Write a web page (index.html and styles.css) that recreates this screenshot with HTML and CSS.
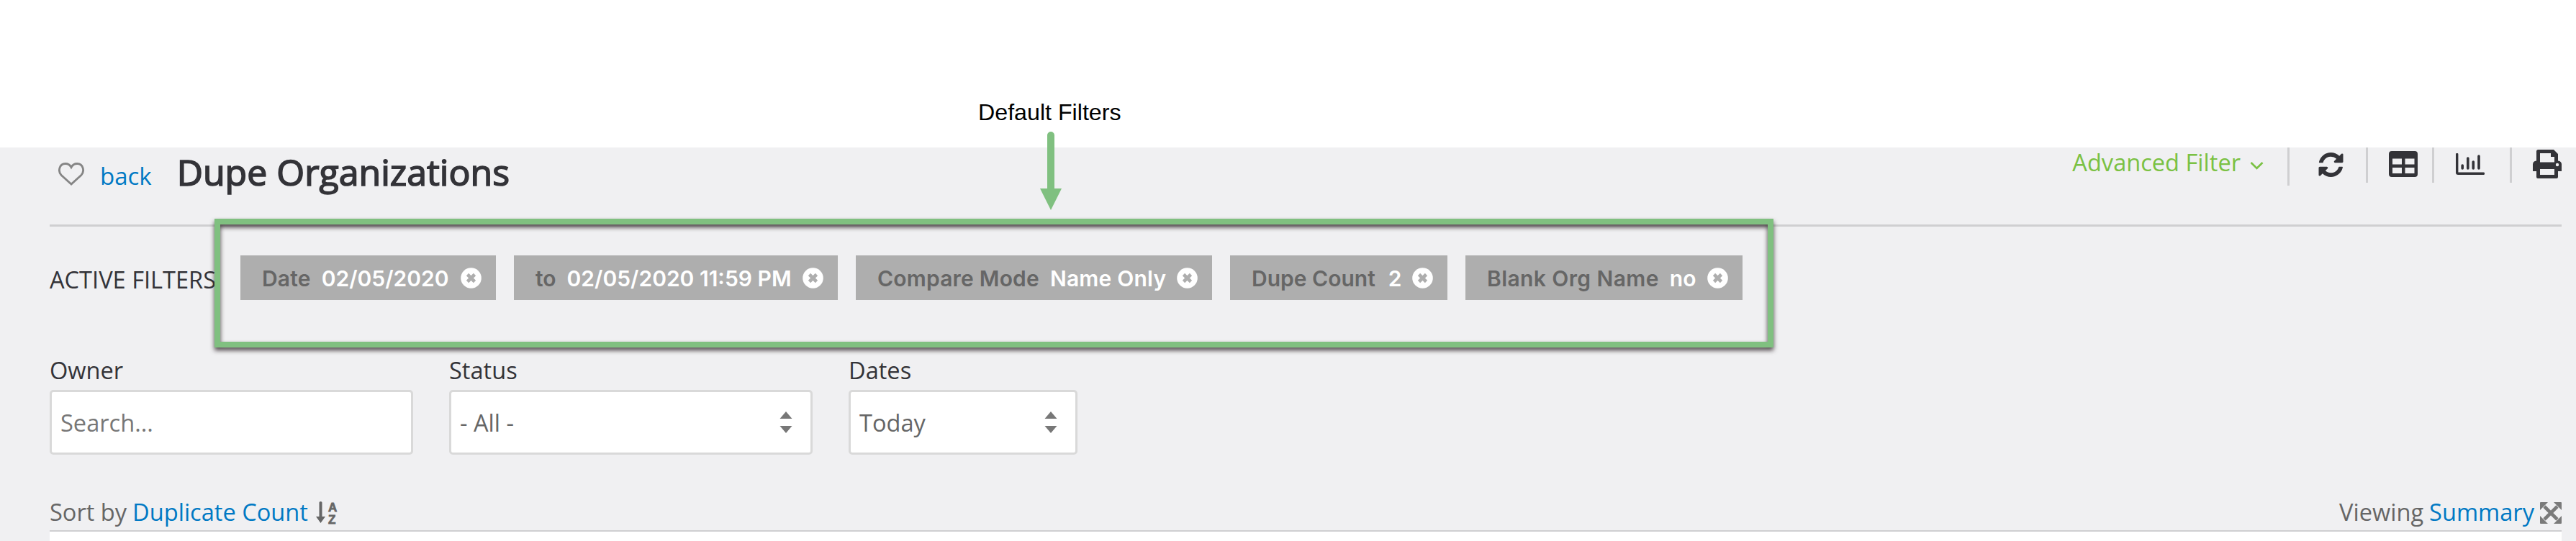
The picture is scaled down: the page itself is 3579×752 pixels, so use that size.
FILE: index.html
```
<!DOCTYPE html>
<html lang="en">
<head>
    <meta charset="UTF-8">
    <meta name="viewport" content="width=device-width, initial-scale=1.0">
    <title>Dupe Organizations</title>
    <link rel="stylesheet" href="styles.css">
</head>
<body>
    <div class="callout">Default Filters</div>
    <svg class="callout-arrow" viewBox="0 0 30 109">
        <path d="M10 84V5a5 5 0 0 1 10 0v74h10L15 109 0 79h10z"/>
    </svg>
    <div class="callout-box"></div>

    <main class="page">
        <header class="page-header">
            <svg class="heart" viewBox="0 0 36 32">
                <path d="M18 30 4.200 17.500C-1 12 1.500 1.500 9.800 1.500c4 0 6.800 2.300 8.200 5 1.400-2.700 4.200-5 8.200-5C34.500 1.500 37 12 31.800 17.500z"/>
            </svg>
            <a class="back" href="#">back</a>
            <h1>Dupe Organizations</h1>

            <div class="tools">
                <a class="advanced" href="#">Advanced Filter</a>
                <svg class="chevron" viewBox="0 0 19 12"><path d="M1.500 2 9.500 10l8-8"/></svg>
                <i class="divider tall"></i>
                <svg class="refresh" viewBox="0 0 1536 1536">
                    <path d="M1511 928q0 5-1 7-64 268-268 434.500T764 1536q-146 0-282.500-55T238 1324l-129 129q-19 19-45 19t-45-19-19-45V960q0-26 19-45t45-19h448q26 0 45 19t19 45-19 45l-137 137q71 66 161 102t187 36q134 0 250-65t186-179q11-17 53-117 8-23 30-23h192q13 0 22.500 9.500t9.500 22.500zM1536 128v448q0 26-19 45t-45 19h-448q-26 0-45-19t-19-45 19-45l138-138q-148-137-349-137-134 0-250 65T332 500q-11 17-53 117-8 23-30 23H50q-13 0-22.500-9.500T18 608v-7q65-268 270-434.500T768 0q146 0 284 55.500T1297 212l130-129q19-19 45-19t45 19 19 45z"/>
                </svg>
                <i class="divider"></i>
                <svg class="table" viewBox="0 0 40 36">
                    <path fill-rule="evenodd" d="M4 0h32a4 4 0 0 1 4 4v28a4 4 0 0 1-4 4H4a4 4 0 0 1-4-4V4a4 4 0 0 1 4-4zM5 10.500v8h13v-8zM22.500 10.500v8h13v-8zM5 23v8h13v-8zM22.500 23v8h13v-8z"/>
                </svg>
                <i class="divider"></i>
                <svg class="chart" viewBox="0 0 40 30">
                    <path d="M1.700 1.500v25.300q0 1.500 1.500 1.500H38.500" stroke-width="3.400"/>
                    <path d="M9.200 17v4M16.800 7v14M24.300 12v9M32 4v17" stroke-width="3.600"/>
                </svg>
                <i class="divider"></i>
                <svg class="print" viewBox="0 0 40 40">
                    <path fill-rule="evenodd" d="M7.500 0H29l6 6v9.500q5 .5 5 5V30h-5v8q0 2-2 2H7q-2 0-2-2v-8H0v-9.500q0-4.500 5-5V2.500Q5 0 7.500 0zM10 5v12.500h20V10h-5V5zM10 27v8h20v-8zM34 18.800a2.200 2.200 0 1 0 0 4.400 2.200 2.200 0 0 0 0-4.400z"/>
                </svg>
            </div>
        </header>

        <section class="active-filters">
            <span class="active-label">ACTIVE FILTERS</span>
            <div class="chips">
                <div class="chip date">
                    <span class="name">Date</span><span class="value">02/05/2020</span>
                    <svg class="close" viewBox="0 0 29 29"><circle cx="14.500" cy="14.500" r="14.300"/><path d="m9.500 9.500 10 10m0-10-10 10"/></svg>
                </div>
                <div class="chip to">
                    <span class="name">to</span><span class="value">02/05/2020 11:59 PM</span>
                    <svg class="close" viewBox="0 0 29 29"><circle cx="14.500" cy="14.500" r="14.300"/><path d="m9.500 9.500 10 10m0-10-10 10"/></svg>
                </div>
                <div class="chip mode">
                    <span class="name">Compare Mode</span><span class="value">Name Only</span>
                    <svg class="close" viewBox="0 0 29 29"><circle cx="14.500" cy="14.500" r="14.300"/><path d="m9.500 9.500 10 10m0-10-10 10"/></svg>
                </div>
                <div class="chip count">
                    <span class="name">Dupe Count</span><span class="value">2</span>
                    <svg class="close" viewBox="0 0 29 29"><circle cx="14.500" cy="14.500" r="14.300"/><path d="m9.500 9.500 10 10m0-10-10 10"/></svg>
                </div>
                <div class="chip blank">
                    <span class="name">Blank Org Name</span><span class="value">no</span>
                    <svg class="close" viewBox="0 0 29 29"><circle cx="14.500" cy="14.500" r="14.300"/><path d="m9.500 9.500 10 10m0-10-10 10"/></svg>
                </div>
            </div>
        </section>

        <form class="fields">
            <label class="field">Owner
                <input type="text" placeholder="Search...">
            </label>
            <div class="field">Status
                <div class="select">- All -
                    <svg class="arrows" viewBox="0 0 18 30"><path d="M9 0l8.500 10H.5zM9 30l8.500-10H.5z"/></svg>
                </div>
            </div>
            <div class="field small">Dates
                <div class="select">Today
                    <svg class="arrows" viewBox="0 0 18 30"><path d="M9 0l8.500 10H.5zM9 30l8.500-10H.5z"/></svg>
                </div>
            </div>
        </form>

        <div class="list-bar">
            <div class="sort">
                Sort by <a href="#">Duplicate Count</a>
                <span class="sort-icon">
                    <svg viewBox="0 0 13 30"><path d="M4.500 1.500q0-1.500 2-1.500t2 1.500V21H13L6.500 30 0 21h4.500z"/></svg>
                    <span class="az"><b>A</b><b>Z</b></span>
                </span>
            </div>
            <div class="viewing">
                Viewing <a href="#">Summary</a>
                <svg class="expand" viewBox="0 0 30 30">
                    <path d="M6 6l18 18M24 6 6 24" stroke-width="4.600"/>
                    <path d="M1 0h10L0 11V1q0-1 1-1zM29 0H19l11 11V1q0-1-1-1zM1 30h10L0 19v10q0 1 1 1zM29 30H19l11-11v10q0 1-1 1z" stroke="none" fill="#7a7a7a"/>
                </svg>
            </div>
        </div>
        <div class="list"></div>
    </main>
</body>
</html>
```
FILE: styles.css
```
* {
    box-sizing: border-box;
}
body {
    margin: 0;
    padding-top: 205px;
    height: 752px;
    overflow: hidden;
    background: #fff;
    color: #333338;
    font-family: "Open Sans", sans-serif;
    font-size: 32.6px;
}
a {
    color: #0079c4;
    text-decoration: none;
}
svg {
    display: block;
    flex: none;
}

/* annotation on top of the page */
.callout {
    position: absolute;
    left: 1359px;
    top: 136px;
    line-height: 40px;
    font-family: "Liberation Sans", sans-serif;
    font-size: 32.2px;
    color: #000;
}
.callout-arrow {
    position: absolute;
    left: 1445px;
    top: 183px;
    width: 30px;
    height: 109px;
    fill: #80c080;
}
.callout-box {
    position: absolute;
    left: 298px;
    top: 304px;
    width: 2166px;
    height: 179px;
    border: 8px solid #80c080;
    filter: drop-shadow(0 4px 3px rgba(50, 40, 45, 0.85));
}

.page {
    height: 547px;
    padding: 0 20px 0 69px;
    background: #f0f0f2;
}

.page-header {
    display: flex;
    align-items: flex-start;
    height: 110px;
    border-bottom: 3px solid #cfcfd1;
}
.heart {
    width: 36px;
    height: 32px;
    margin: 21px 22px 0 12px;
    fill: none;
    stroke: #858585;
    stroke-width: 2.8;
}
.back {
    line-height: 80px;
    margin-right: 35px;
    font-size: 33px;
}
h1 {
    margin: 0;
    font-size: 50px;
    font-weight: 400;
    line-height: 69px;
    -webkit-text-stroke: 1.6px #333338;
}

.tools {
    display: flex;
    align-items: flex-start;
    margin-left: auto;
    fill: #333338;
}
.advanced {
    line-height: 42px;
    color: #7ac143;
}
.chevron {
    width: 19px;
    height: 12px;
    margin: 19px 33px 0 13px;
    fill: none;
    stroke: #7ac143;
    stroke-width: 2.6;
}
.divider {
    width: 3px;
    height: 49px;
    background: #cfcfd1;
}
.divider.tall {
    height: 53px;
}
.refresh {
    width: 35px;
    height: 34px;
    margin: 7px 31px 0 40px;
}
.table {
    width: 40px;
    height: 36px;
    margin: 5px 20px 0 29px;
}
.chart {
    width: 40px;
    height: 30px;
    margin: 8px 35px 0 30px;
    fill: none;
    stroke: #333338;
    stroke-linecap: round;
}
.print {
    width: 40px;
    height: 40px;
    margin: 3px 0 0 29px;
}

.active-filters {
    display: flex;
    align-items: center;
    padding-top: 40px;
}
.active-label {
    width: 265px;
    padding-top: 4px;
    white-space: nowrap;
}
.chips {
    display: flex;
    gap: 25px;
}
.chip {
    display: flex;
    align-items: center;
    height: 62px;
    padding: 0 20px 0 30px;
    background: #aeaeae;
    color: #fff;
    font-family: Inter, sans-serif;
    font-size: 30px;
    font-weight: 600;
    white-space: nowrap;
}
.chip span {
    padding-top: 1px;
}
.chip .name {
    margin-right: 15px;
    color: #666;
}
.close {
    width: 29px;
    height: 29px;
    margin-left: auto;
    fill: #fff;
    stroke: none;
}
.close path {
    stroke: #aeaeae;
    stroke-width: 4.6;
}
.date { width: 355px; }
.to { width: 450px; }
.mode { width: 495px; }
.count { width: 302px; }
.blank { width: 385px; }
.date .name,
.mode .name,
.mode .value { letter-spacing: 0.2px; }
.blank .name { letter-spacing: 0.4px; }
.count .value { padding-left: 3px; }

.fields {
    display: flex;
    gap: 50px;
    margin-top: 75px;
}
.field {
    width: 505px;
    line-height: 45px;
}
.field.small {
    width: 318px;
}
.field input,
.select {
    display: flex;
    align-items: center;
    width: 100%;
    height: 90px;
    margin-top: 5px;
    padding: 0 25px 0 12px;
    border: 3px solid #d9d9d9;
    border-radius: 5px;
    background: #fff;
    color: #666;
    font: inherit;
}
.field input::placeholder {
    color: #777;
}
.arrows {
    width: 18px;
    height: 30px;
    margin-left: auto;
    fill: #777;
}

.list-bar {
    display: flex;
    justify-content: space-between;
    height: 48px;
    margin-top: 59px;
    line-height: 41px;
    color: #666;
    border-bottom: 2px solid #cfcfd1;
}
.sort,
.viewing {
    display: flex;
    gap: 8px;
}
.sort-icon {
    display: flex;
    gap: 4px;
    padding-top: 6px;
    margin-left: 3px;
}
.sort-icon svg {
    width: 13px;
    height: 30px;
    fill: #666;
}
.az {
    display: flex;
    flex-direction: column;
    font-family: "Liberation Sans", sans-serif;
    font-size: 17px;
    line-height: 17px;
    -webkit-text-stroke: 0.8px #666;
}
.expand {
    width: 30px;
    height: 30px;
    margin-top: 7px;
    stroke: #7a7a7a;
}
.list {
    height: 13px;
    background: #fff;
}
```
